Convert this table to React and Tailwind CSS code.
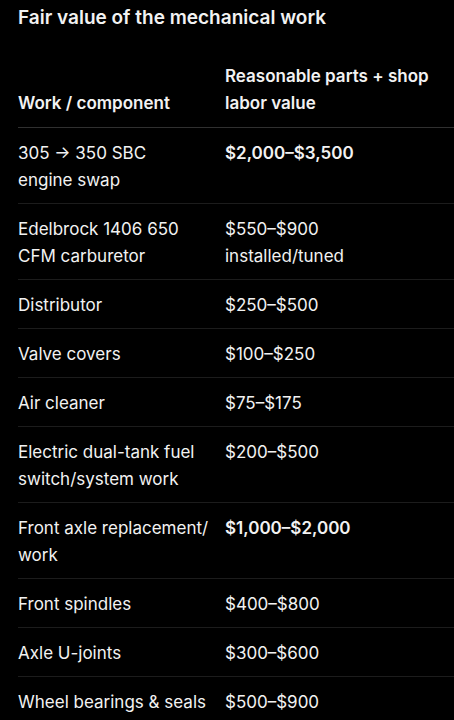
const rows = [
  { work: ['305 → 350 SBC', 'engine swap'], value: '$2,000–$3,500', bold: true },
  { work: ['Edelbrock 1406 650 CFM carburetor'], value: '$550–$900 installed/tuned' },
  { work: ['Distributor'], value: '$250–$500' },
  { work: ['Valve covers'], value: '$100–$250' },
  { work: ['Air cleaner'], value: '$75–$175' },
  { work: ['Electric dual-tank fuel switch/system work'], value: '$200–$500' },
  { work: ['Front axle replacement/ work'], value: '$1,000–$2,000', bold: true },
  { work: ['Front spindles'], value: '$400–$800' },
  { work: ['Axle U-joints'], value: '$300–$600' },
  { work: ['Wheel bearings & seals'], value: '$500–$900' },
];

export default function App() {
  return (
    <div className="min-h-screen w-[454px] overflow-hidden bg-black text-[#f2f2f2] font-['Inter',sans-serif] antialiased">
      {/* Title */}
      <h2 className="pl-[18px] pt-[4px] text-[19px] leading-[28px] font-semibold">
        Fair value of the mechanical work
      </h2>

      {/* Table */}
      <div className="mt-[20px] pl-[18px]">
        <div className="grid grid-cols-[207px_212px] border-b border-[#303030] pt-[11px] pb-[10px] text-[17px] leading-[27px] font-semibold">
          <div className="self-end pr-3">Work / component</div>
          <div>Reasonable parts + shop labor value</div>
        </div>

        {rows.map((row, i) => (
          <div
            key={row.work.join(' ')}
            className={`grid grid-cols-[207px_212px] pt-[12px] pb-[9px] text-[17px] leading-[27px] ${
              i < rows.length - 1 ? 'border-b border-[#1c1c1c]' : ''
            }`}
          >
            <div className="pr-3">
              {row.work.map((line, j) => (
                <span key={j} className="block">{line}</span>
              ))}
            </div>
            <div className={row.bold ? 'font-semibold' : ''}>{row.value}</div>
          </div>
        ))}
      </div>
    </div>
  );
}
